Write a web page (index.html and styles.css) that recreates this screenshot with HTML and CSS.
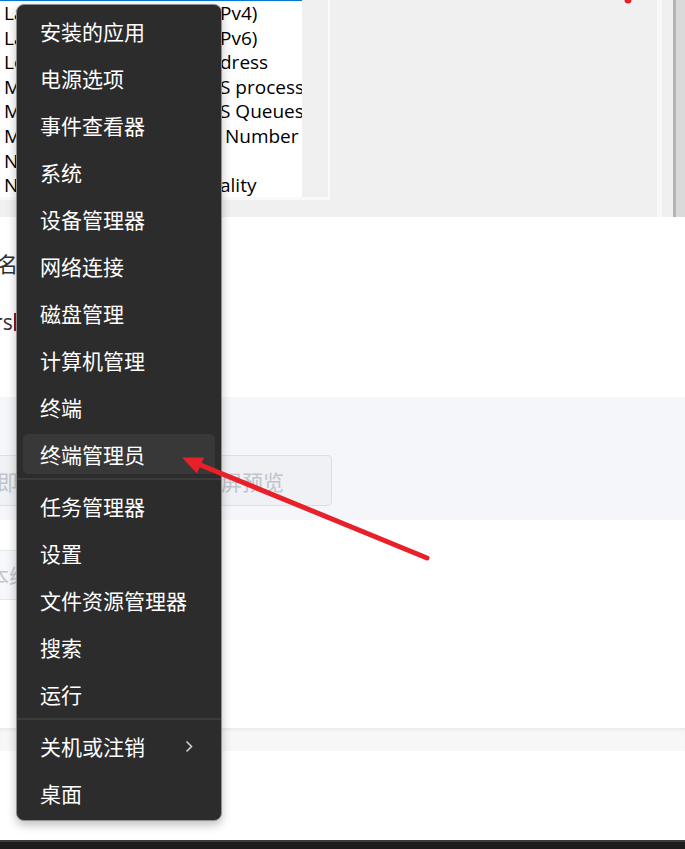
FILE: index.html
```html
<!DOCTYPE html>
<html lang="zh-CN">
<head>
<meta charset="utf-8">
<title>Context menu</title>
<link rel="stylesheet" href="styles.css">
</head>
<body>
<div class="screen">
  <div class="dialog">
    <div class="listbox">
      <div class="list">
        <div class="row"><span class="l">Large Send Offload V2 (I</span><span class="r">Pv4)</span></div>
        <div class="row"><span class="l">Large Send Offload V2 (I</span><span class="r">Pv6)</span></div>
        <div class="row"><span class="l">Locally Administered Ad</span><span class="r">dress</span></div>
        <div class="row"><span class="l">Maximum number of RS</span><span class="r">S processors</span></div>
        <div class="row"><span class="l">Maximum Number of RS</span><span class="r">S Queues</span></div>
        <div class="row"><span class="l">Maximum RSS Processor</span><span class="r"> Number</span></div>
        <div class="row"><span class="l">Network Address</span><span class="r"></span></div>
        <div class="row"><span class="l">NetworkDirect Function</span><span class="r">ality</span></div>
      </div>
      <div class="vscroll"></div>
    </div>
    <div class="dialog-fill"></div>
    <div class="strip-light"></div>
    <div class="strip-gap"></div>
    <div class="frame-line"></div>
    <div class="frame-edge"></div>
  </div>

  <div class="page">
    <div class="label">用户名</div>
    <div class="value">Users<span class="mark"></span></div>
    <div class="band">
      <div class="btns">
        <div class="btn btn-a">立即生成</div>
        <div class="btn btn-b">全屏预览</div>
      </div>
    </div>
    <div class="input">基本缩略图</div>
    <div class="band2"></div>
  </div>

  <div class="taskbar"></div>
</div>

<div class="menu">
  <div class="item">安装的应用</div>
  <div class="item">电源选项</div>
  <div class="item">事件查看器</div>
  <div class="item">系统</div>
  <div class="item">设备管理器</div>
  <div class="item">网络连接</div>
  <div class="item">磁盘管理</div>
  <div class="item">计算机管理</div>
  <div class="item">终端</div>
  <div class="item hover">终端管理员</div>
  <div class="sep"></div>
  <div class="item">任务管理器</div>
  <div class="item">设置</div>
  <div class="item">文件资源管理器</div>
  <div class="item">搜索</div>
  <div class="item">运行</div>
  <div class="sep"></div>
  <div class="item">关机或注销<svg class="chev" width="8" height="13" viewBox="0 0 8 13"><polyline points="1.5,1.5 6.5,6.5 1.5,11.5" fill="none" stroke="#d0d0d0" stroke-width="1.6"/></svg></div>
  <div class="item last">桌面</div>
</div>

<svg class="annot" width="685" height="849" viewBox="0 0 685 849">
  <line x1="427" y1="558" x2="198" y2="464" stroke="#e8202a" stroke-width="5" stroke-linecap="round"/>
  <polygon points="182,457.5 204,457.5 197,473.5" fill="#e8202a"/>
  <circle cx="628" cy="0" r="3.5" fill="#e8202a"/>
</svg>
</body>
</html>
```

FILE: styles.css
```css
* { box-sizing: border-box; margin: 0; padding: 0; }

html, body {
  width: 685px;
  height: 849px;
  overflow: hidden;
  background: #ffffff;
}

body {
  position: relative;
  font-family: "Noto Sans CJK SC", "Noto Sans", sans-serif;
}

.screen {
  width: 685px;
  height: 849px;
  display: flex;
  flex-direction: column;
}

/* ---------- background dialog ---------- */
.dialog {
  flex: none;
  height: 217px;
  display: flex;
  background: #f0f0f0;
}

.listbox {
  width: 330px;
  height: 200px;
  display: flex;
  border-right: 2px solid #fafafa;
  border-bottom: 3px solid #f9f9f9;
}

.list {
  width: 302px;
  background: #ffffff;
  border-top: 1px solid #0078d7;
  overflow: hidden;
  font-family: "Open Sans", "Noto Sans", sans-serif;
  font-size: 19px;
  color: #000000;
}

.row {
  display: grid;
  grid-template-columns: 216px auto;
  padding-left: 4px;
  height: 24.6px;
  line-height: 24.6px;
  white-space: pre;
}

.row .l { overflow: hidden; }
.row .r { overflow: hidden; }

.vscroll { flex: 1; background: #f0f0f0; }

.dialog-fill { flex: 1; }
.strip-light { width: 5px; background: #f8f8f8; }
.strip-gap { width: 11px; }
.frame-line { width: 3px; background: #b3b3b3; }
.frame-edge { width: 9px; background: #dadada; }

/* ---------- web page ---------- */
.page {
  flex: 1;
  display: flex;
  flex-direction: column;
  align-items: flex-start;
  background: #ffffff;
  font-size: 21px;
  overflow: hidden;
}

.label {
  margin: 31px 0 0 -45px;
  line-height: 30px;
  color: #303133;
}

.value {
  margin: 29px 0 0 -43px;
  height: 30px;
  display: flex;
  align-items: center;
  color: #303133;
  font-family: "Open Sans", "Noto Sans", sans-serif;
}

.mark {
  width: 3px;
  height: 18px;
  margin-left: 1px;
  background: #8a1c1c;
}

.band {
  align-self: stretch;
  margin-top: 60px;
  height: 123px;
  padding-top: 58px;
  background: #f4f6f9;
}

.btns {
  display: flex;
  gap: 12px;
  margin-left: -60px;
}

.btn {
  height: 51px;
  display: flex;
  align-items: center;
  border: 1px solid #dcdfe6;
  border-radius: 4px;
  background: #eff1f5;
  color: #c0c4cc;
}

.btn-a { width: 200px; padding-left: 35px; }
.btn-b { width: 180px; justify-content: center; }

.input {
  margin: 30px 0 0 -60px;
  width: 250px;
  height: 50px;
  padding-left: 26px;
  display: flex;
  align-items: center;
  border: 1px solid #e4e7ed;
  border-radius: 4px;
  background: #f5f7fa;
  color: #c0c4cc;
}

.band2 {
  align-self: stretch;
  margin-top: 128px;
  height: 23px;
  background: #f7f7f7;
  box-shadow: inset 0 4px 4px -3px rgba(0, 0, 0, 0.08);
}

.taskbar {
  flex: none;
  height: 9px;
  background: #1c1c1c;
  border-top: 2px solid #3b3b3b;
}

/* ---------- context menu ---------- */
.menu {
  position: absolute;
  left: 16px;
  top: 4px;
  width: 206px;
  padding-top: 6px;
  background: #2c2c2c;
  border: 1px solid #8f8f8f;
  border-radius: 8px;
  box-shadow: 0 4px 10px rgba(0, 0, 0, 0.25);
  color: #ffffff;
  font-size: 21px;
}

.item {
  height: 40px;
  margin: 0 6px 7px;
  padding: 0 22px 0 17px;
  display: flex;
  align-items: center;
  justify-content: space-between;
  border-radius: 5px;
  line-height: 1;
  white-space: nowrap;
}

.item.last { margin-bottom: 7px; }
.item.hover { background: #383838; }

.sep {
  height: 2px;
  margin: -3px 0 6px;
  background: #3b3b3b;
}

.chev { display: block; }

/* ---------- annotation ---------- */
.annot {
  position: absolute;
  left: 0;
  top: 0;
  pointer-events: none;
}
```
